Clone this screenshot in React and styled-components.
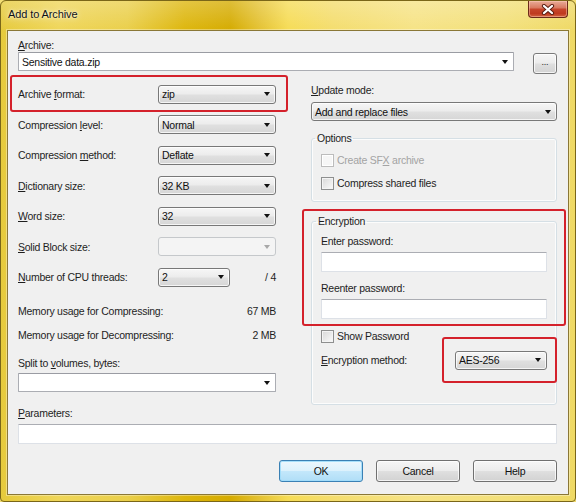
import React from "react";
import styled, { createGlobalStyle } from "styled-components";

const GlobalStyle = createGlobalStyle`
  html, body {
    margin: 0;
    padding: 0;
    background: #f3de74;
  }
`;

const Window = styled.div`
  width: 576px;
  height: 502px;
  box-sizing: border-box;
  display: flex;
  flex-direction: column;
  border: 1px solid #7a6618;
  border-radius: 6px 6px 4px 4px;
  overflow: hidden;
  background:
    linear-gradient(180deg, rgba(255, 255, 255, 0.22) 0%, rgba(255, 255, 255, 0) 30px),
    linear-gradient(
      90deg,
      #e6ca3c 0%,
      #efd659 10%,
      #eacf4a 22%,
      #ddb60c 32%,
      #d5ab00 40%,
      #e4c232 45%,
      #f6dc55 50%,
      #f4dd6e 58%,
      #f6e385 72%,
      #f3e07a 88%,
      #efd964 100%
    );
  font-family: "Liberation Sans", Arial, sans-serif;
  font-size: 10.5px;
  letter-spacing: -0.25px;
  color: #1e1e1e;
`;

const TitleBar = styled.div`
  height: 29px;
  flex: none;
  display: flex;
  align-items: flex-start;
  justify-content: space-between;
  padding-left: 7px;
`;

const Title = styled.div`
  padding-top: 6px;
  line-height: 14px;
  font-size: 11px;
  letter-spacing: -0.1px;
  color: #111;
  text-shadow: 0 0 6px rgba(255, 255, 255, 0.9), 0 0 2px rgba(255, 255, 255, 0.8);
`;

const CloseButton = styled.div`
  width: 40px;
  height: 17px;
  margin-right: 7px;
  box-sizing: border-box;
  display: flex;
  align-items: center;
  justify-content: center;
  border: 1px solid #6b2a18;
  border-top: none;
  border-radius: 0 0 4px 4px;
  background: linear-gradient(180deg, #e9ab98 0%, #d97b62 42%, #c6452a 52%, #bf3b20 78%, #d2633f 100%);
  box-shadow: inset 0 0 0 1px rgba(255, 210, 190, 0.45);
`;

const Client = styled.div`
  flex: 1;
  margin: 0 6px 6px;
  padding: 7px 11px 0 10px;
  background: #f0f0f0;
  border: 1px solid #8a7736;
  box-shadow: 0 0 0 1px rgba(255, 255, 255, 0.35);
  display: flex;
  flex-direction: column;
`;

const Label = styled.div`
  line-height: 14px;
  white-space: nowrap;
  color: ${(p) => (p.$disabled ? "#a3a3a3" : "#1e1e1e")};
`;

const Key = styled.span`
  text-decoration: underline;
`;

const ArchiveRow = styled.div`
  height: 22px;
  display: flex;
  align-items: flex-start;
  justify-content: space-between;
`;

const Combo = styled.div`
  box-sizing: border-box;
  height: 19px;
  width: ${(p) => p.$w || "100%"};
  flex: none;
  display: flex;
  align-items: center;
  justify-content: space-between;
  padding: 0 5px 0 3px;
  border: 1px solid ${(p) => (p.$disabled ? "#c5c8cb" : p.$editable ? "#abadb3" : "#787878")};
  border-top-color: ${(p) => (p.$editable ? "#9a9ca3" : "")};
  border-radius: ${(p) => (p.$editable ? "1px" : "3px")};
  background: ${(p) =>
    p.$disabled
      ? "#f4f4f4"
      : p.$editable
      ? "#ffffff"
      : "linear-gradient(180deg, #f6f6f6 0%, #ececec 48%, #e0e0e0 52%, #d6d6d6 100%)"};
  box-shadow: ${(p) => (p.$editable || p.$disabled ? "none" : "inset 0 0 0 1px rgba(255,255,255,0.75)")};
  color: #111;
`;

const Arrow = styled.span`
  width: 0;
  height: 0;
  border-left: 3.5px solid transparent;
  border-right: 3.5px solid transparent;
  border-top: 4px solid ${(p) => (p.$disabled ? "#a8a8a8" : "#111")};
`;

const DotsButton = styled.div`
  width: 24px;
  height: 21px;
  margin-top: 1px;
  box-sizing: border-box;
  display: flex;
  align-items: center;
  justify-content: center;
  border: 1px solid #7a7a7a;
  border-radius: 3px;
  background: linear-gradient(180deg, #f6f6f6 0%, #ececec 48%, #dfdfdf 52%, #d3d3d3 100%);
  box-shadow: inset 0 0 0 1px rgba(255, 255, 255, 0.75);
  font-size: 9px;
  line-height: 9px;
  padding-bottom: 2px;
`;

const Columns = styled.div`
  margin-top: 5px;
  display: grid;
  grid-template-columns: 258px 246px;
  column-gap: 35px;
  align-items: start;
`;

const Column = styled.div`
  display: flex;
  flex-direction: column;
`;

const SettingRow = styled.div`
  display: grid;
  grid-template-columns: 140px 118px;
  align-items: center;
  height: 30.5px;
`;

const ThreadsControl = styled.div`
  display: flex;
  align-items: center;
  justify-content: space-between;
`;

const InfoRow = styled.div`
  height: 24px;
  display: flex;
  align-items: center;
  justify-content: space-between;
  margin-top: ${(p) => p.$mt || 0}px;
`;

const Marked = styled.div`
  position: relative;
  margin-top: ${(p) => p.$mt || 0}px;

  &::after {
    content: "";
    position: absolute;
    inset: ${(p) => p.$inset};
    border: 2px solid #d4212b;
    border-radius: 3px;
    pointer-events: none;
  }
`;

const Spaced = styled.div`
  margin-top: ${(p) => p.$mt || 0}px;
`;

const Group = styled.fieldset`
  margin: 0;
  margin-top: ${(p) => p.$mt || 0}px;
  min-width: 0;
  padding: ${(p) => p.$pad};
  border: 1px solid #d5dfe5;
  border-radius: 3px;
  box-shadow: inset 0 0 0 1px rgba(255, 255, 255, 0.8);
  display: flex;
  flex-direction: column;
`;

const Legend = styled.legend`
  padding: 0 2px;
  margin-left: ${(p) => p.$shift || -5}px;
  line-height: 14px;
  color: #1e1e1e;
`;

const CheckRow = styled.div`
  height: 20px;
  display: flex;
  align-items: center;
  gap: 3px;
  margin-top: ${(p) => p.$mt || 0}px;
  color: ${(p) => (p.$disabled ? "#a3a3a3" : "#1e1e1e")};
`;

const Box = styled.span`
  width: 13px;
  height: 13px;
  box-sizing: border-box;
  flex: none;
  border: 1px solid ${(p) => (p.$disabled ? "#bcbcbc" : "#8e8f8f")};
  background: ${(p) =>
    p.$disabled
      ? "#f6f6f6"
      : "linear-gradient(135deg, #d8d8d8 0%, #e9e9e9 50%, #fbfbfb 100%)"};
  box-shadow: inset 0 0 0 1px ${(p) => (p.$disabled ? "#ffffff" : "#f4f4f4")};
`;

const TextBox = styled.div`
  box-sizing: border-box;
  height: 20px;
  margin-top: ${(p) => p.$mt || 0}px;
  background: #fff;
  border: 1px solid #dde1e7;
  border-top-color: #abadb3;
  border-radius: 1px;
`;

const MethodRow = styled.div`
  height: 20px;
  margin-top: 4px;
  display: flex;
  align-items: center;
  justify-content: space-between;
`;

const ButtonRow = styled.div`
  margin-top: 16px;
  display: flex;
  justify-content: flex-end;
  gap: 13px;
`;

const Button = styled.div`
  width: 84px;
  height: 22px;
  box-sizing: border-box;
  display: flex;
  align-items: center;
  justify-content: center;
  border: 1px solid ${(p) => (p.$primary ? "#3a80b4" : "#707070")};
  border-radius: 3px;
  background: ${(p) =>
    p.$primary
      ? "linear-gradient(180deg, #ecf7fd 0%, #dcf1fc 48%, #c3e7fb 52%, #b0def7 100%)"
      : "linear-gradient(180deg, #f6f6f6 0%, #ececec 48%, #dfdfdf 52%, #d2d2d2 100%)"};
  box-shadow: inset 0 0 0 1px ${(p) => (p.$primary ? "rgba(160,220,250,0.9)" : "rgba(255,255,255,0.75)")};
  color: #111;
`;

function DropDown({ value, width, editable, disabled }) {
  return (
    <Combo $w={width} $editable={editable} $disabled={disabled}>
      <span>{value}</span>
      <Arrow $disabled={disabled} />
    </Combo>
  );
}

function CloseGlyph() {
  return (
    <svg width="14" height="11" viewBox="0 0 14 11">
      <path d="M3 2 L11 9 M11 2 L3 9" stroke="#5a1e12" strokeWidth="4.2" strokeLinecap="round" />
      <path d="M3 2 L11 9 M11 2 L3 9" stroke="#ffffff" strokeWidth="2.3" strokeLinecap="round" />
    </svg>
  );
}

export default function App() {
  return (
    <>
      <GlobalStyle />
      <Window>
        <TitleBar>
          <Title>Add to Archive</Title>
          <CloseButton>
            <CloseGlyph />
          </CloseButton>
        </TitleBar>

        <Client>
          <Label>
            <Key>A</Key>rchive:
          </Label>
          <ArchiveRow>
            <DropDown value="Sensitive data.zip" width="496px" editable />
            <DotsButton>...</DotsButton>
          </ArchiveRow>

          <Columns>
            <Column>
              <Marked $inset="-4px -12px -2.5px -8px">
                <SettingRow>
                  <Label>
                    Archive <Key>f</Key>ormat:
                  </Label>
                  <DropDown value="zip" />
                </SettingRow>
              </Marked>
              <SettingRow>
                <Label>
                  Compression <Key>l</Key>evel:
                </Label>
                <DropDown value="Normal" />
              </SettingRow>
              <SettingRow>
                <Label>
                  Compression <Key>m</Key>ethod:
                </Label>
                <DropDown value="Deflate" />
              </SettingRow>
              <SettingRow>
                <Label>
                  <Key>D</Key>ictionary size:
                </Label>
                <DropDown value="32 KB" />
              </SettingRow>
              <SettingRow>
                <Label>
                  <Key>W</Key>ord size:
                </Label>
                <DropDown value="32" />
              </SettingRow>
              <SettingRow>
                <Label>
                  <Key>S</Key>olid Block size:
                </Label>
                <DropDown value="" disabled />
              </SettingRow>
              <SettingRow>
                <Label>
                  <Key>N</Key>umber of CPU threads:
                </Label>
                <ThreadsControl>
                  <DropDown value="2" width="72px" />
                  <Label>/ 4</Label>
                </ThreadsControl>
              </SettingRow>

              <InfoRow $mt={6.5}>
                <Label>Memory usage for Compressing:</Label>
                <Label>67 MB</Label>
              </InfoRow>
              <InfoRow>
                <Label>Memory usage for Decompressing:</Label>
                <Label>2 MB</Label>
              </InfoRow>

              <Spaced $mt={9}>
                <Label>
                  Split to <Key>v</Key>olumes, bytes:
                </Label>
              </Spaced>
              <Spaced $mt={3}>
                <DropDown value="" editable />
              </Spaced>
            </Column>

            <Column>
              <Spaced $mt={4}>
                <Label>
                  <Key>U</Key>pdate mode:
                </Label>
              </Spaced>
              <Spaced $mt={5}>
                <DropDown value="Add and replace files" />
              </Spaced>

              <Group $mt={10} $pad="5px 9px 8px">
                <Legend $shift={-6}>Options</Legend>
                <CheckRow $disabled>
                  <Box $disabled />
                  <span>
                    Create SF<Key>X</Key> archive
                  </span>
                </CheckRow>
                <CheckRow $mt={3}>
                  <Box />
                  <span>Compress shared files</span>
                </CheckRow>
              </Group>

              <Marked $mt={12} $inset="-5px -9px 79px -9px">
                <Group $pad="6px 9px 34px">
                  <Legend $shift={-5}>Encryption</Legend>
                  <Label>Enter password:</Label>
                  <TextBox $mt={4} />
                  <Spaced $mt={9}>
                    <Label>Reenter password:</Label>
                  </Spaced>
                  <TextBox $mt={4} />
                  <CheckRow $mt={7}>
                    <Box />
                    <span>Show Password</span>
                  </CheckRow>
                  <MethodRow>
                    <Label>
                      <Key>E</Key>ncryption method:
                    </Label>
                    <Marked $inset="-14px -10px -13px -13px">
                      <DropDown value="AES-256" width="92px" />
                    </Marked>
                  </MethodRow>
                </Group>
              </Marked>
            </Column>
          </Columns>

          <Spaced $mt={1}>
            <Label>
              <Key>P</Key>arameters:
            </Label>
          </Spaced>
          <TextBox $mt={4} />

          <ButtonRow>
            <Button $primary>OK</Button>
            <Button>Cancel</Button>
            <Button>Help</Button>
          </ButtonRow>
        </Client>
      </Window>
    </>
  );
}
